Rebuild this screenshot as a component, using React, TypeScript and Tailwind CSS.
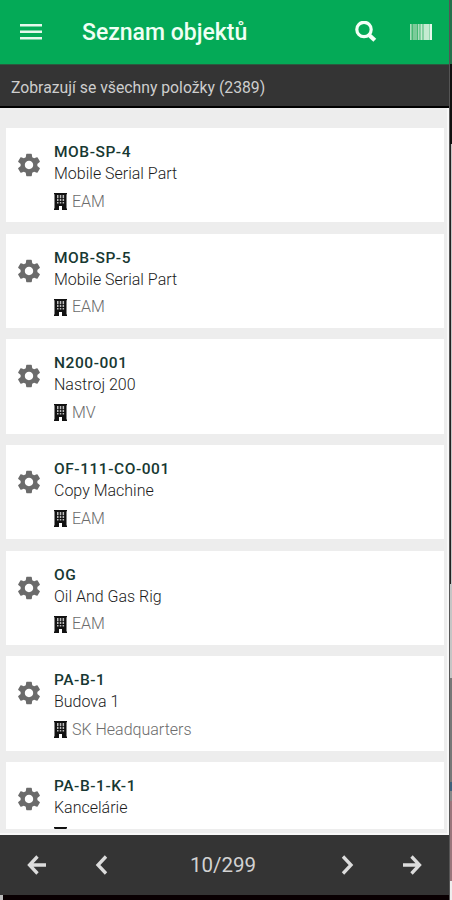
import React from "react";
import { MdSettings } from "react-icons/md";

const items = [
  { code: "MOB-SP-4", name: "Mobile Serial Part", org: "EAM" },
  { code: "MOB-SP-5", name: "Mobile Serial Part", org: "EAM" },
  { code: "N200-001", name: "Nastroj 200", org: "MV" },
  { code: "OF-111-CO-001", name: "Copy Machine", org: "EAM" },
  { code: "OG", name: "Oil And Gas Rig", org: "EAM" },
  { code: "PA-B-1", name: "Budova 1", org: "SK Headquarters" },
  { code: "PA-B-1-K-1", name: "Kancelárie", org: "" },
];

function Building() {
  return (
    <svg width="13" height="17" viewBox="0 0 13 17" className="shrink-0">
      <path d="M0 0h13v1.200h-.5v14.300h.5V17H8v-4H5v4H0v-1.500h.5V1.200H0z" fill="#111" />
      <path d="M3 2h1.500v3H3zm2.800 0h1.500v3H5.800zm2.800 0h1.500v3H8.600zM3 5.800h1.500v2.200H3zm2.800 0h1.500v2.200H5.800zm2.800 0h1.500v2.200H8.600zM3 9h1.500v1.500H3zm2.800 0h1.500v1.500H5.800zm2.800 0h1.500v1.500H8.600z" fill="#bbb" />
    </svg>
  );
}

function Card({ code, name, org }: { code: string; name: string; org: string }) {
  return (
    <article className="flex h-[94.2px] shrink-0 bg-white pl-[9px]">
      <MdSettings size={28} color="#6b6b6b" className="mt-[23px] shrink-0" />
      <div className="ml-[11px] pt-[13px]">
        <h2 className="h-[22px] text-[15.5px] leading-[22px] font-medium tracking-[0.55px] text-[#173832]">{code}</h2>
        <p className="h-[22px] text-[16px] leading-[22px] font-light text-[#1c1c1c]">{name}</p>
        <div className="mt-[5.5px] flex h-[22px] items-center gap-[5px] text-[16px] leading-[22px] font-light text-[#6c6c6c]">
          <Building />
          <span>{org}</span>
        </div>
      </div>
    </article>
  );
}

function Stroke({ d, width = 3 }: { d: string; width?: number }) {
  return (
    <svg width="20" height="20" viewBox="0 0 20 20" fill="none" stroke="#dcdcdc" strokeWidth={width}>
      <path d={d} />
    </svg>
  );
}

export default function App() {
  return (
    <div className="flex h-[900px] w-[452px] overflow-hidden bg-black font-['Roboto',sans-serif]">
      <main className="flex w-[449px] flex-col">
        <header className="flex h-[64px] shrink-0 items-center bg-[#04aa57] pl-[20px]">
          <svg width="22" height="16" viewBox="0 0 22 16" fill="#e6f8ec">
            <path d="M0 0h22v2.600H0zM0 6.500h22v2.600H0zM0 13h22v2.600H0z" />
          </svg>
          <h1 className="ml-[40px] w-[273px] pt-[2px] text-[23px] leading-[30px] font-medium text-[#effff4]">Seznam objektů</h1>
          <svg width="22" height="22" viewBox="0 0 22 22" fill="none" stroke="#f2fff6">
            <circle cx="9" cy="8.500" r="7.200" strokeWidth="3.200" />
            <path d="M13.500 13.500l6.300 5.800" strokeWidth="4.200" />
          </svg>
          <svg width="22" height="16" viewBox="0 0 22 16" className="ml-[33px]">
            <path d="M0 0h22v16H0z" fill="#45b873" />
            <path d="M0 0h1.500v16H0zM8 0h1.500v16H8z" fill="#a9dfbd" />
            <path d="M3 0h4v16H3z" fill="#7bcb99" />
            <path d="M10.500 0h2v16h-2zM13.500 0h5.500v16h-5.500z" fill="#c5ebd1" />
            <path d="M19.500 0H22v16h-2.500z" fill="#e6f8ec" />
          </svg>
        </header>
        <div className="h-[44px] shrink-0 border-t border-b-2 border-t-[#2b5a3f] border-b-black bg-[#343434] pl-[11px] text-[15.75px] leading-[45px] text-[#cecece]">
          Zobrazují se všechny položky (2389)
        </div>
        <section className="flex h-[727px] shrink-0 flex-col border-r-2 border-b-2 border-r-[#f8f8f8] border-b-[#f8f8f8] bg-[#ededed] pr-[3.5px] pl-[6px]">
          <div className="mt-[20px] flex h-[701px] flex-col gap-[11.5px] overflow-hidden">
            {items.map((item) => (
              <Card key={item.code} {...item} />
            ))}
          </div>
        </section>
        <footer className="flex h-[60px] shrink-0 items-center bg-[#343434] pl-[27px] text-[#d2d2d2]">
          <span className="h-[20px] w-[20px]"><Stroke d="M19 10H3M10.500 1.500L2.500 10l8 8.500" width={3.3} /></span>
          <span className="ml-[45px] h-[20px]"><Stroke d="M14 1.500L6 10l8 8.500" width={3.3} /></span>
          <span className="ml-[78px] w-[68px] text-[20.5px] leading-[24px]">10/299</span>
          <span className="ml-[79px] h-[20px]"><Stroke d="M6 1.500l8 8.500-8 8.500" width={3.3} /></span>
          <span className="ml-[45px] h-[20px]"><Stroke d="M1 10h16M9.500 1.500l8 8.500-8 8.500" width={3.3} /></span>
        </footer>
        <div className="flex h-[5px] bg-[#090002]">
          <div className="h-[5px] w-[3px] bg-[#bbb]" />
        </div>
      </main>
      <aside className="flex w-[3px] flex-col border-l border-l-[#555]">
        <div className="h-[64px] bg-[#23724b]" />
        <div className="h-[80px] bg-[#111]" />
        <div className="h-[440px] border-r border-r-[#c4c4c4] bg-[#222]" />
        <div className="h-[94px] bg-[#c5c5c5]" />
        <div className="h-[104px] bg-[#777]" />
        <div className="h-[9px] bg-[#3f607b]" />
        <div className="h-[10px] bg-[#888]" />
        <div className="h-[80px] bg-[#9a757b]" />
        <div className="h-[19px] bg-[#eee]" />
      </aside>
    </div>
  );
}
